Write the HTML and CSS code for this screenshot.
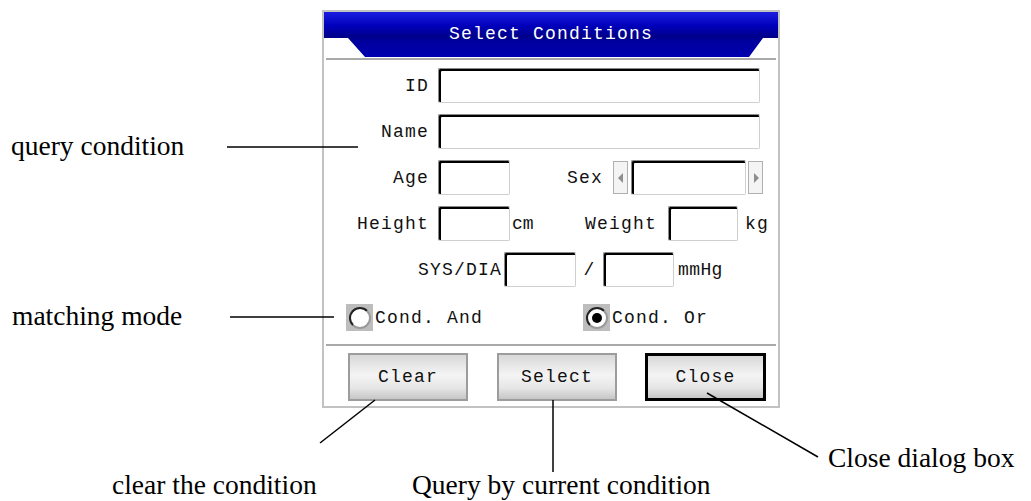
FILE: index.html
```html
<!DOCTYPE html>
<html lang="en">
<head>
    <meta charset="UTF-8">
    <meta name="viewport" content="width=device-width, initial-scale=1.0">
    <title>Select Conditions</title>
    <link rel="stylesheet" href="styles.css">
</head>
<body>

    <div class="page">

        <!-- Dialog -->
        <div class="dialog">
            <div class="title">Select Conditions</div>
            <div class="rule"></div>

            <div class="row">
                <span class="label w105">ID</span>
                <span class="field wide"></span>
            </div>
            <div class="row">
                <span class="label w105">Name</span>
                <span class="field wide"></span>
            </div>
            <div class="row">
                <span class="label w105">Age</span>
                <span class="field small"></span>
                <span class="label sex">Sex</span>
                <div class="spinner">
                    <span class="arrow">
                        <svg width="6" height="10" viewBox="0 0 6 10"><path d="M5 0 L0 5 L5 10 Z" fill="#8e8e8e"/></svg>
                    </span>
                    <span class="field spin"></span>
                    <span class="arrow">
                        <svg width="6" height="10" viewBox="0 0 6 10"><path d="M1 0 L6 5 L1 10 Z" fill="#8e8e8e"/></svg>
                    </span>
                </div>
            </div>
            <div class="row">
                <span class="label w105">Height</span>
                <span class="field small"></span>
                <span class="unit cm">cm</span>
                <span class="label weight">Weight</span>
                <span class="field small2"></span>
                <span class="unit kg">kg</span>
            </div>
            <div class="row">
                <span class="label sys">SYS/DIA</span>
                <span class="field small"></span>
                <span class="slash">/</span>
                <span class="field small3"></span>
                <span class="unit mmhg">mmHg</span>
            </div>

            <!-- Matching mode -->
            <div class="row modes">
                <label class="mode first"><span class="radio"><span class="ring"></span></span>Cond. And</label>
                <label class="mode"><span class="radio"><span class="ring checked"></span></span>Cond. Or</label>
            </div>

            <div class="rule bottom"></div>

            <div class="buttons">
                <button class="btn">Clear</button>
                <button class="btn">Select</button>
                <button class="btn default">Close</button>
            </div>
        </div>

        <!-- Callouts -->
        <svg class="callouts" width="1031" height="501" viewBox="0 0 1031 501">
            <g stroke="#000" stroke-width="1.5">
                <line x1="227" y1="147" x2="358" y2="147"/>
                <line x1="230" y1="317" x2="334" y2="317"/>
                <line x1="375" y1="400" x2="320" y2="443"/>
                <line x1="553" y1="400" x2="553" y2="472"/>
                <line x1="707" y1="393" x2="818" y2="457"/>
            </g>
        </svg>
        <div class="note n-query">query condition</div>
        <div class="note n-match">matching mode</div>
        <div class="note n-clear">clear the condition</div>
        <div class="note n-select">Query by current condition</div>
        <div class="note n-close">Close dialog box</div>

    </div>

</body>
</html>
```

FILE: styles.css
```css
body {
    margin: 0;
    padding: 0;
    background-color: #fff;
    color: #111;
}
.page {
    position: relative;
    width: 1031px;
    height: 501px;
    overflow: hidden;
    font-family: "Liberation Mono", monospace;
    font-size: 18px;
    letter-spacing: 1.2px;
}
.dialog {
    box-sizing: border-box;
    width: 458px;
    margin-left: 322px;
    margin-top: 10px;
    border: 2px solid #c2c2c2;
    padding-bottom: 5px;
    background-color: #fff;
}
.title {
    height: 45px;
    line-height: 45px;
    text-align: center;
    color: #fff;
    background: linear-gradient(#1c1ce0 0, #0000bc 30%, #000088 56%, #00009c 62%, #0000b0 100%);
    clip-path: polygon(0 0, 100% 0, 100% 26px, 439px 26px, 425px 45px, 41px 45px, 24px 26px, 0 26px);
}
.rule {
    height: 2px;
    margin: 1px 2px 0;
    background-color: #a9a9a9;
}
.rule.bottom {
    margin-top: 13px;
}
.row {
    display: flex;
    align-items: center;
    height: 35px;
    margin-top: 11px;
}
.rule + .row {
    margin-top: 8px;
}
.label {
    text-align: right;
    white-space: nowrap;
}
.w105 {
    width: 105px;
    margin-right: 9px;
}
.field {
    box-sizing: border-box;
    height: 35px;
    border: 1px solid;
    border-color: #8a8a8a #cfcfcf #cfcfcf #8a8a8a;
    border-radius: 2px;
    box-shadow: inset 2px 2px 0 #000;
    background-color: #fff;
}
.wide {
    width: 322px;
}
.small {
    width: 72px;
}
.small2 {
    width: 70px;
}
.small3 {
    width: 71px;
}
.sex {
    width: 93px;
    margin-right: 10px;
}
.spinner {
    display: flex;
    align-items: center;
    height: 35px;
}
.arrow {
    box-sizing: border-box;
    width: 15px;
    height: 33px;
    border: 1px solid #b0b0b0;
    background-color: #f4f4f4;
    display: flex;
    align-items: center;
    justify-content: center;
}
.spin {
    width: 115px;
    margin: 0 2px 0 3px;
}
.unit.cm {
    width: 23px;
    margin-left: 2px;
    letter-spacing: 0;
}
.weight {
    width: 122px;
    margin-right: 11px;
}
.unit.kg {
    margin-left: 7px;
}
.sys {
    width: 178px;
    margin-right: 2px;
}
.slash {
    width: 27px;
    text-align: center;
}
.unit.mmhg {
    margin-left: 4px;
    letter-spacing: 0.4px;
}
.row.modes {
    height: 27px;
    margin-top: 17px;
    padding-left: 22px;
}
.mode {
    display: flex;
    align-items: center;
}
.mode.first {
    width: 237px;
}
.radio {
    width: 27px;
    height: 27px;
    background-color: #bdbdbd;
    display: flex;
    align-items: center;
    justify-content: center;
    margin-right: 2px;
}
.ring {
    box-sizing: border-box;
    width: 22px;
    height: 22px;
    border-radius: 50%;
    border: 2px solid #222;
    border-right-color: #9a9a9a;
    border-bottom-color: #9a9a9a;
    background-color: #fff;
    display: flex;
    align-items: center;
    justify-content: center;
}
.ring.checked::after {
    content: "";
    width: 10px;
    height: 10px;
    border-radius: 50%;
    background-color: #000;
}
.buttons {
    display: flex;
    gap: 29px;
    padding-left: 24px;
    margin-top: 7px;
}
.btn {
    box-sizing: border-box;
    width: 120px;
    height: 48px;
    font-family: "Liberation Mono", monospace;
    font-size: 18px;
    letter-spacing: 1.2px;
    color: #111;
    border: 2px solid #9c9c9c;
    background: linear-gradient(#d8d8d8 0, #f4f4f4 45%, #e6e6e6 75%, #c6c6c6 100%);
    padding: 0;
}
.btn.default {
    width: 121px;
    margin-left: -1px;
    border: 3px solid #000;
}
.callouts {
    position: absolute;
    left: 0;
    top: 0;
    pointer-events: none;
}
.note {
    position: absolute;
    font-family: "Liberation Serif", "Times New Roman", serif;
    font-size: 27.5px;
    line-height: 27px;
    letter-spacing: 0;
    color: #000;
    white-space: nowrap;
}
.n-query {
    left: 11px;
    top: 132px;
}
.n-match {
    left: 12px;
    top: 302px;
}
.n-clear {
    left: 112px;
    top: 471px;
}
.n-select {
    left: 412px;
    top: 471px;
}
.n-close {
    left: 828px;
    top: 444px;
}
```
